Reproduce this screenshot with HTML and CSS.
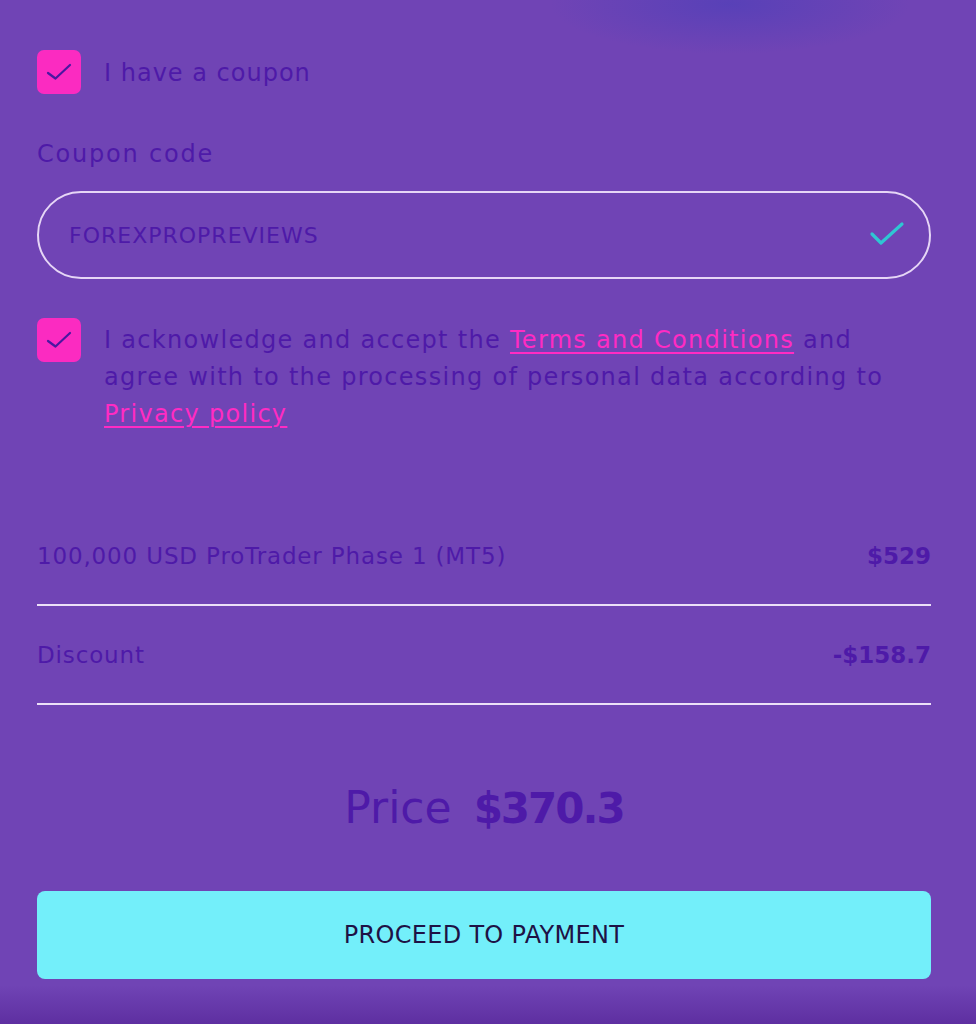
FILE: index.html
```html
<!DOCTYPE html>
<html lang="en">
<head>
<meta charset="utf-8">
<title>Checkout</title>
<link rel="stylesheet" href="styles.css">
</head>
<body>
<main class="page">
  <label class="check-row">
    <span class="checkbox">
      <svg viewBox="0 0 44 44" width="44" height="44"><path d="M11 23 L18.5 28.5 L33 15" fill="none" stroke="#4a17a0" stroke-width="2.2" stroke-linecap="round" stroke-linejoin="round"/></svg>
    </span>
    <span class="check-label">I have a coupon</span>
  </label>

  <div class="field-label">Coupon code</div>
  <div class="input">
    <span class="input-value">FOREXPROPREVIEWS</span>
    <svg class="input-ok" viewBox="0 0 40 30" width="40" height="30"><path d="M5 14 L14 23 L35 4" fill="none" stroke="#2fc6d3" stroke-width="3.2" stroke-linecap="round" stroke-linejoin="round"/></svg>
  </div>

  <label class="check-row terms">
    <span class="checkbox">
      <svg viewBox="0 0 44 44" width="44" height="44"><path d="M11 23 L18.5 28.5 L33 15" fill="none" stroke="#4a17a0" stroke-width="2.2" stroke-linecap="round" stroke-linejoin="round"/></svg>
    </span>
    <span class="terms-text">I acknowledge and accept the <a href="#">Terms and Conditions</a> and agree with to the processing of personal data according to <a href="#">Privacy policy</a></span>
  </label>

  <section class="summary">
    <div class="summary-row">
      <span class="summary-label">100,000 USD ProTrader Phase 1 (MT5)</span>
      <strong>$529</strong>
    </div>
    <div class="summary-row">
      <span class="summary-label">Discount</span>
      <strong>-$158.7</strong>
    </div>
  </section>

  <div class="total"><span class="total-label">Price</span><strong class="total-value">$370.3</strong></div>

  <button class="pay">PROCEED TO PAYMENT</button>
</main>
</body>
</html>
```
FILE: styles.css
```css
html, body {
  margin: 0;
  padding: 0;
}
body {
  min-height: 1024px;
  font-family: "DejaVu Sans", "Noto Sans", sans-serif;
  color: #4e1aa8;
  background:
    radial-gradient(ellipse 180px 50px at 730px 4px, rgba(84, 64, 184, 0.85), rgba(84, 64, 184, 0) 100%),
    linear-gradient(to bottom, #7044b5 0, #7044b5 985px, #5e2fa1 1024px);
}
.page {
  padding: 50px 45px 0 37px;
}
.check-row {
  display: flex;
  align-items: center;
  gap: 23px;
}
.checkbox {
  flex: none;
  width: 44px;
  height: 44px;
  border-radius: 7px;
  background: #fb2bc1;
  display: block;
}
.checkbox svg {
  display: block;
}
.check-label {
  font-size: 24px;
  letter-spacing: 1px;
  line-height: 32px;
  padding-top: 2px;
}
.field-label {
  margin-top: 44px;
  font-size: 24px;
  letter-spacing: 1.8px;
  line-height: 32px;
}
.input {
  margin-top: 21px;
  height: 88px;
  box-sizing: border-box;
  border: 2px solid #e6d6f6;
  border-radius: 44px;
  display: flex;
  align-items: center;
  justify-content: space-between;
  padding: 0 22px 0 30px;
}
.input-value {
  font-size: 22px;
  letter-spacing: 1px;
}
.input-ok {
  display: block;
}
.terms {
  margin-top: 39px;
  align-items: flex-start;
}
.terms-text {
  font-size: 24px;
  letter-spacing: 1.3px;
  line-height: 37px;
  padding-top: 4px;
  padding-right: 45px;
}
.terms-text a {
  color: #ff2bc3;
  text-decoration: underline;
  text-underline-offset: 4px;
  text-decoration-thickness: 2px;
}
.summary {
  margin-top: 74px;
}
.summary-row {
  display: flex;
  justify-content: space-between;
  align-items: center;
  padding: 33px 0 32px;
  border-bottom: 2px solid #ece0f8;
  font-size: 23px;
  line-height: 32px;
}
.summary-label {
  letter-spacing: 0.85px;
}
.summary-row strong {
  font-weight: 700;
}
.total {
  margin-top: 75px;
  display: flex;
  justify-content: center;
  align-items: baseline;
  gap: 22px;
  line-height: 56px;
}
.total-label {
  font-size: 44px;
  font-weight: 400;
}
.total-value {
  font-size: 42px;
  font-weight: 700;
  letter-spacing: -2px;
}
.pay {
  display: block;
  margin-top: 54px;
  width: 100%;
  height: 88px;
  border: 0;
  border-radius: 8px;
  background: #73effa;
  color: #1e1245;
  font-family: "DejaVu Sans", "Noto Sans", sans-serif;
  font-size: 24px;
  letter-spacing: 0.3px;
  cursor: pointer;
}
```
